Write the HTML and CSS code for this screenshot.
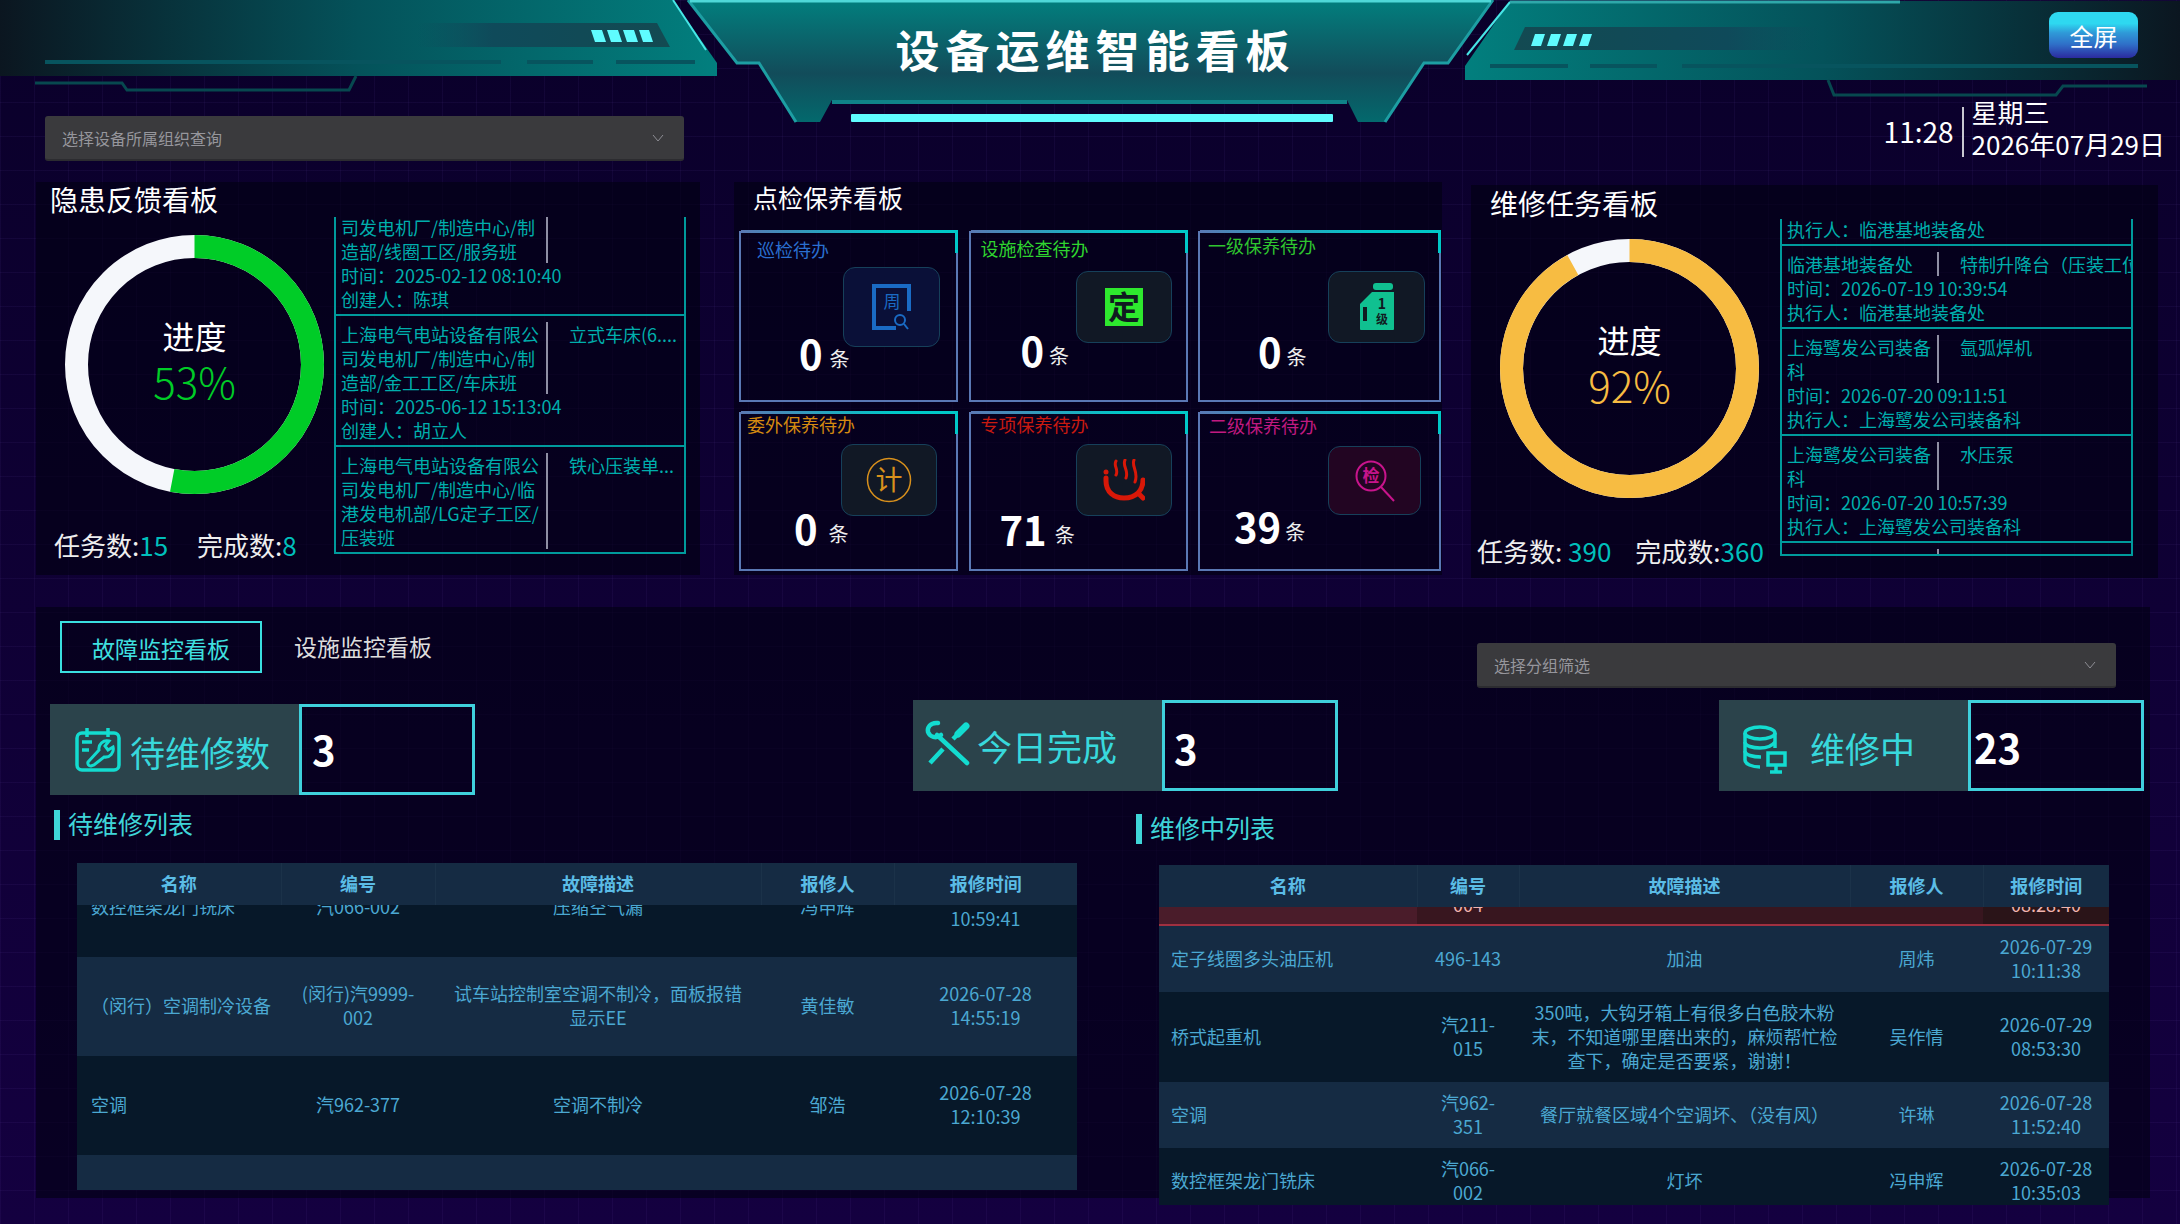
FILE: index.html
```html
<!DOCTYPE html>
<html lang="zh-CN">
<head>
<meta charset="UTF-8" />
<title>设备运维智能看板</title>
<link rel="stylesheet" href="styles.css">
</head>
<body>
<div class="page">

  <header class="top">
    <svg class="top-art" viewBox="0 0 2180 130" width="2180" height="130">
      <defs>
        <linearGradient id="barL" x1="0" x2="1" y1="0" y2="0">
          <stop offset="0" stop-color="#0b1620"/><stop offset="0.5" stop-color="#04525a"/><stop offset="1" stop-color="#027f7e"/>
        </linearGradient>
        <linearGradient id="barR" x1="1" x2="0" y1="0" y2="0">
          <stop offset="0" stop-color="#0b1620"/><stop offset="0.5" stop-color="#04525a"/><stop offset="1" stop-color="#027f7e"/>
        </linearGradient>
        <linearGradient id="mid" x1="0" x2="0" y1="0" y2="1">
          <stop offset="0" stop-color="#027f7e"/><stop offset="0.6" stop-color="#124c5a"/><stop offset="1" stop-color="#03696d"/>
        </linearGradient>
        <linearGradient id="glowL" x1="0" x2="1" y1="0" y2="0">
          <stop offset="0" stop-color="#0b7f84"/><stop offset="1" stop-color="#5ffcff"/>
        </linearGradient>
        <linearGradient id="glowR" x1="1" x2="0" y1="0" y2="0">
          <stop offset="0" stop-color="#0b7f84"/><stop offset="1" stop-color="#5ffcff"/>
        </linearGradient>
        <linearGradient id="plateL" x1="0" x2="1" y1="0" y2="0">
          <stop offset="0" stop-color="#0f4a5a" stop-opacity="0"/><stop offset="0.3" stop-color="#0f4a5a"/><stop offset="1" stop-color="#134a52"/>
        </linearGradient>
        <linearGradient id="plateR" x1="1" x2="0" y1="0" y2="0">
          <stop offset="0" stop-color="#0f4a5a" stop-opacity="0"/><stop offset="0.3" stop-color="#0f4a5a"/><stop offset="1" stop-color="#134a52"/>
        </linearGradient>
      </defs>

      <!-- left wing -->
      <polygon points="0,0 673,0 717,63 717,76 0,76" fill="url(#barL)"/>
      <line x1="673" y1="0" x2="706" y2="50" stroke="#47e6e6" stroke-width="2"/>
      <polygon points="417,23 657,23 670,47 417,47" fill="url(#plateL)"/>
      <g fill="#5ffcff">
        <polygon points="591,30 602,30 606,42 595,42"/>
        <polygon points="607,30 618,30 622,42 611,42"/>
        <polygon points="623,30 634,30 638,42 627,42"/>
        <polygon points="639,30 649,30 653,42 643,42"/>
      </g>
      <path d="M45 62H501M527 62H593M616 62H695" stroke="#07545e" stroke-width="4"/>
      <line x1="356" y1="77" x2="717" y2="77" stroke="url(#glowL)" stroke-width="4"/>
      <path d="M35 83H122L127 90H349L356 76" fill="none" stroke="#07484f" stroke-width="3"/>

      <!-- middle plate -->
      <polygon points="688,0 1493,0 1448,63 1424,63 1385,122 1358,122 1347,100 832,100 820,122 796,122 759,63 737,63" fill="url(#mid)"/>
      <path d="M688 0L737 63H759L796 122" fill="none" stroke="#1d9ea3" stroke-width="3"/>
      <path d="M1493 0L1448 63H1424L1385 122" fill="none" stroke="#1d9ea3" stroke-width="3"/>
      <line x1="690" y1="1" x2="1491" y2="1" stroke="#4fd8d8" stroke-width="3"/>
      <path d="M832 102H1347" stroke="#0f8288" stroke-width="4"/>
      <rect x="851" y="114" width="482" height="8" rx="1" fill="#5ffcff"/>

      <!-- right wing -->
      <polygon points="1510,1 2180,1 2180,80 1465,80 1465,66" fill="url(#barR)"/>
      <line x1="1510" y1="2" x2="1467" y2="55" stroke="#47e6e6" stroke-width="2"/>
      <line x1="1510" y1="2" x2="1900" y2="2" stroke="#2fa8aa" stroke-width="3"/>
      <polygon points="1525,27 1820,27 1820,50 1514,50" fill="url(#plateR)"/>
      <g fill="#5ffcff">
        <polygon points="1535,34 1545,34 1541,46 1531,46"/>
        <polygon points="1551,34 1561,34 1557,46 1547,46"/>
        <polygon points="1567,34 1577,34 1573,46 1563,46"/>
        <polygon points="1583,34 1592,34 1588,46 1579,46"/>
      </g>
      <path d="M1490 66H1568M1590 66H1657M1682 66H2138" stroke="#07545e" stroke-width="4"/>
      <line x1="1465" y1="80" x2="1827" y2="80" stroke="url(#glowR)" stroke-width="4"/>
      <path d="M1828 80L1834 95H2056L2063 86H2147" fill="none" stroke="#07484f" stroke-width="3"/>
    </svg>
    <h1 class="top-title">设备运维智能看板</h1>
    <button class="fullscreen">全屏</button>
  </header>

  <div class="toolbar">
    <div class="select select-org">
      <span>选择设备所属组织查询</span>
      <svg class="chev" viewBox="0 0 12 8" width="12" height="8"><path d="M1 1l5 6 5-6" fill="none" stroke="#8d8d94" stroke-width="1"/></svg>
    </div>
    <div class="clock">
      <div class="clock-time">11:28</div>
      <div class="clock-line"></div>
      <div class="clock-date">
        <div>星期三</div>
        <div>2026年07月29日</div>
      </div>
    </div>
  </div>

  <section class="boards">

    <div class="board board-hazard">
      <div class="board-left">
        <h2 class="board-title">隐患反馈看板</h2>
        <div class="ring">
          <svg viewBox="0 0 259 259" width="259" height="259">
            <circle cx="129.5" cy="129.5" r="118" fill="none" stroke="#f5f7fb" stroke-width="23"/>
            <circle cx="129.5" cy="129.5" r="118" fill="none" stroke="#00cc27" stroke-width="23" stroke-dasharray="393 742" transform="rotate(-90 129.5 129.5)"/>
          </svg>
          <div class="ring-text">
            <div class="ring-label">进度</div>
            <div class="ring-value green">53%</div>
          </div>
        </div>
        <div class="counts">
          <span>任务数:<b>15</b></span>
          <span>完成数:<b>8</b></span>
        </div>
      </div>
      <div class="feed">
        <div class="feed-item feed-scrolled">
          <div class="feed-head">
            <div class="feed-org">上海电气电站设备有限公司发电机厂/制造中心/制造部/线圈工区/服务班</div>
            <div class="feed-name"></div>
          </div>
          <div>时间：2025-02-12 08:10:40</div>
          <div>创建人：陈琪</div>
        </div>
        <div class="feed-item">
          <div class="feed-head">
            <div class="feed-org">上海电气电站设备有限公司发电机厂/制造中心/制造部/金工工区/车床班</div>
            <div class="feed-name">立式车床(6....</div>
          </div>
          <div>时间：2025-06-12 15:13:04</div>
          <div>创建人：胡立人</div>
        </div>
        <div class="feed-item">
          <div class="feed-head">
            <div class="feed-org">上海电气电站设备有限公司发电机厂/制造中心/临港发电机部/LG定子工区/压装班</div>
            <div class="feed-name">铁心压装单...</div>
          </div>
        </div>
      </div>
    </div>

    <div class="board board-check">
      <h2 class="board-title">点检保养看板</h2>
      <div class="cards">
        <div class="card card-a">
          <div class="card-label">巡检待办</div>
          <div class="card-icon">
            <svg viewBox="0 0 40 46" width="40" height="46">
              <path d="M24 44H2V2H37V27" fill="none" stroke="#1a6bc4" stroke-width="4"/>
              <text x="20" y="24" class="glyph" font-size="17" fill="#1a6bc4" text-anchor="middle">周</text>
              <circle cx="28" cy="36" r="5" fill="none" stroke="#1a6bc4" stroke-width="2"/>
              <line x1="32" y1="40" x2="36" y2="45" stroke="#1a6bc4" stroke-width="2"/>
            </svg>
          </div>
          <div class="card-value"><b>0</b><span>条</span></div>
        </div>
        <div class="card card-b">
          <div class="card-label">设施检查待办</div>
          <div class="card-icon">
            <svg viewBox="0 0 38 38" width="38" height="38">
              <rect width="38" height="38" fill="#2ee82e"/>
              <text x="19" y="31" class="glyph glyph-bold" font-size="32" fill="#101a20" text-anchor="middle">定</text>
            </svg>
          </div>
          <div class="card-value"><b>0</b><span>条</span></div>
        </div>
        <div class="card card-c">
          <div class="card-label">一级保养待办</div>
          <div class="card-icon">
            <svg viewBox="0 0 36 48" width="36" height="48">
              <rect x="14" y="0" width="20" height="7" rx="3" fill="#10c090"/>
              <path d="M13 9H35V46a1 1 0 0 1-1 1H2a1 1 0 0 1-1-1V21z" fill="#10c090"/>
              <rect x="4" y="24" width="4" height="14" fill="#101a20"/>
              <text x="23" y="26" class="glyph glyph-bold" font-size="14" fill="#101a20" text-anchor="middle">1</text>
              <text x="23" y="41" class="glyph glyph-bold" font-size="12" fill="#101a20" text-anchor="middle">级</text>
            </svg>
          </div>
          <div class="card-value"><b>0</b><span>条</span></div>
        </div>
        <div class="card card-d">
          <div class="card-label">委外保养待办</div>
          <div class="card-icon">
            <svg viewBox="0 0 46 46" width="46" height="46">
              <circle cx="23" cy="23" r="21.5" fill="none" stroke="#d8901c" stroke-width="1.5"/>
              <text x="23" y="33" class="glyph" font-size="27" fill="#d8901c" text-anchor="middle">计</text>
            </svg>
          </div>
          <div class="card-value"><b>0</b><span>条</span></div>
        </div>
        <div class="card card-e">
          <div class="card-label">专项保养待办</div>
          <div class="card-icon">
            <svg viewBox="0 0 42 42" width="42" height="42">
              <g fill="none" stroke="#d81808" stroke-width="3" stroke-linecap="round">
                <path d="M13 2c-3 5 3 8 0 14"/>
                <path d="M22 1c-3 6 4 10 1 18"/>
                <path d="M31 1c-3 6 5 12 1 22"/>
              </g>
              <path d="M3 19v3c0 11 8 17 18 17 6 0 11-2 14-5l5 5M40 21c0 6-2 10-5 13" fill="none" stroke="#d81808" stroke-width="5" stroke-linecap="round"/>
              <circle cx="3" cy="13" r="2.5" fill="#d81808"/>
            </svg>
          </div>
          <div class="card-value"><b>71</b><span>条</span></div>
        </div>
        <div class="card card-f">
          <div class="card-label">二级保养待办</div>
          <div class="card-icon">
            <svg viewBox="0 0 40 42" width="40" height="42">
              <circle cx="16" cy="16" r="14.500" fill="none" stroke="#c8148c" stroke-width="2"/>
              <line x1="26" y1="27" x2="39" y2="41" stroke="#c8148c" stroke-width="2"/>
              <text x="16" y="22" class="glyph glyph-bold" font-size="17" fill="#c8148c" text-anchor="middle">检</text>
            </svg>
          </div>
          <div class="card-value"><b>39</b><span>条</span></div>
        </div>
      </div>
    </div>

    <div class="board board-repair">
      <div class="board-left">
        <h2 class="board-title">维修任务看板</h2>
        <div class="ring">
          <svg viewBox="0 0 259 259" width="259" height="259">
            <circle cx="129.5" cy="129.5" r="118" fill="none" stroke="#f5f7fb" stroke-width="23"/>
            <circle cx="129.5" cy="129.5" r="118" fill="none" stroke="#f7bc42" stroke-width="23" stroke-dasharray="682 742" transform="rotate(-90 129.5 129.5)"/>
          </svg>
          <div class="ring-text">
            <div class="ring-label">进度</div>
            <div class="ring-value gold">92%</div>
          </div>
        </div>
        <div class="counts">
          <span>任务数: <b>390</b></span>
          <span>完成数:<b>360</b></span>
        </div>
      </div>
      <div class="feed">
        <div class="feed-item feed-tail">
          <div>执行人：临港基地装备处</div>
        </div>
        <div class="feed-item">
          <div class="feed-head">
            <div class="feed-org">临港基地装备处</div>
            <div class="feed-name">特制升降台（压装工位）</div>
          </div>
          <div>时间：2026-07-19 10:39:54</div>
          <div>执行人：临港基地装备处</div>
        </div>
        <div class="feed-item">
          <div class="feed-head">
            <div class="feed-org">上海鹭发公司装备科</div>
            <div class="feed-name">氩弧焊机</div>
          </div>
          <div>时间：2026-07-20 09:11:51</div>
          <div>执行人：上海鹭发公司装备科</div>
        </div>
        <div class="feed-item">
          <div class="feed-head">
            <div class="feed-org">上海鹭发公司装备科</div>
            <div class="feed-name">水压泵</div>
          </div>
          <div>时间：2026-07-20 10:57:39</div>
          <div>执行人：上海鹭发公司装备科</div>
        </div>
        <div class="feed-item">
          <div class="feed-head">
            <div class="feed-org feed-blank"></div>
          </div>
        </div>
      </div>
    </div>

  </section>

  <section class="monitor">
    <div class="monitor-top">
      <div class="tabs">
        <div class="tab active">故障监控看板</div>
        <div class="tab">设施监控看板</div>
      </div>
      <div class="select select-group">
        <span>选择分组筛选</span>
        <svg class="chev" viewBox="0 0 12 8" width="12" height="8"><path d="M1 1l5 6 5-6" fill="none" stroke="#8d8d94" stroke-width="1"/></svg>
      </div>
    </div>

    <div class="stats">
      <div class="stat stat-wait">
        <div class="stat-name">
          <svg viewBox="0 0 60 60" width="60" height="60" fill="none" stroke="#13dcd0">
            <rect x="7" y="13" width="42" height="37" rx="5" stroke-width="3.5"/>
            <path d="M17 8V17M38 8V17M12 22H22M12 30H19" stroke-width="3.5"/>
            <path d="M21 46a3 3 0 0 1-3-4L29 30a8 8 0 0 1 10-9l-4 5 3 4 5-3a8 8 0 0 1-9 10L24 45z" stroke-width="3"/>
          </svg>
          <span>待维修数</span>
        </div>
        <div class="stat-value">3</div>
      </div>
      <div class="stat stat-done">
        <div class="stat-name">
          <svg viewBox="0 0 60 60" width="60" height="60" fill="none" stroke="#13dcd0">
            <path d="M17 19L47 47" stroke-width="4.500" stroke-linecap="round"/>
            <path d="M18 7C10 6 7 12 8 16C10 21 16 23 21 19" stroke-width="4.500" stroke-linecap="round"/>
            <path d="M46 10L38 18" stroke-width="7" stroke-linecap="round"/>
            <path d="M38 18L33 23M23 33L10 47" stroke-width="4.500"/>
          </svg>
          <span>今日完成</span>
        </div>
        <div class="stat-value">3</div>
      </div>
      <div class="stat stat-doing">
        <div class="stat-name">
          <svg viewBox="0 0 60 60" width="60" height="60" fill="none" stroke="#13dcd0" stroke-width="3.500">
            <ellipse cx="25" cy="13" rx="15" ry="6"/>
            <path d="M10 13V40c0 4 7 7 15 7M40 13V28"/>
            <path d="M10 22c0 4 8 6 15 6s12-2 15-6M10 31c0 4 8 6 16 6"/>
            <rect x="33" y="33" width="17" height="12"/>
            <path d="M41 45V52M35 52H47"/>
          </svg>
          <span>维修中</span>
        </div>
        <div class="stat-value">23</div>
      </div>
    </div>

    <div class="lists">
      <div class="list list-wait">
        <div class="list-title">待维修列表</div>
        <div class="list-table">
          <table class="list-head">
            <colgroup><col class="c1"><col class="c2"><col class="c3"><col class="c4"><col class="c5"></colgroup>
            <tr><th>名称</th><th>编号</th><th>故障描述</th><th>报修人</th><th>报修时间</th></tr>
          </table>
          <div class="list-body">
            <table>
              <colgroup><col class="c1"><col class="c2"><col class="c3"><col class="c4"><col class="c5"></colgroup>
              <tr><td class="name">数控框架龙门铣床</td><td>汽066-002</td><td>压缩空气漏</td><td>冯申辉</td><td>2026-07-28 10:59:41</td></tr>
              <tr><td class="name">（闵行）空调制冷设备</td><td>(闵行)汽9999-002</td><td>试车站控制室空调不制冷，面板报错显示EE</td><td>黄佳敏</td><td>2026-07-28 14:55:19</td></tr>
              <tr><td class="name">空调</td><td>汽962-377</td><td>空调不制冷</td><td>邹浩</td><td>2026-07-28 12:10:39</td></tr>
              <tr><td class="name"></td><td></td><td></td><td></td><td></td></tr>
            </table>
          </div>
        </div>
      </div>

      <div class="list list-doing">
        <div class="list-title">维修中列表</div>
        <div class="list-table">
          <table class="list-head">
            <colgroup><col class="c1"><col class="c2"><col class="c3"><col class="c4"><col class="c5"></colgroup>
            <tr><th>名称</th><th>编号</th><th>故障描述</th><th>报修人</th><th>报修时间</th></tr>
          </table>
          <div class="list-body">
            <table>
              <colgroup><col class="c1"><col class="c2"><col class="c3"><col class="c4"><col class="c5"></colgroup>
              <tr class="overdue"><td class="name"></td><td>汽211-004</td><td></td><td></td><td>2026-07-29 08:28:40</td></tr>
              <tr><td class="name">定子线圈多头油压机</td><td>496-143</td><td>加油</td><td>周炜</td><td>2026-07-29 10:11:38</td></tr>
              <tr><td class="name">桥式起重机</td><td>汽211-015</td><td>350吨，大钩牙箱上有很多白色胶木粉末，不知道哪里磨出来的，麻烦帮忙检查下，确定是否要紧，谢谢！</td><td>吴作情</td><td>2026-07-29 08:53:30</td></tr>
              <tr><td class="name">空调</td><td>汽962-351</td><td>餐厅就餐区域4个空调坏、（没有风）</td><td>许琳</td><td>2026-07-28 11:52:40</td></tr>
              <tr><td class="name">数控框架龙门铣床</td><td>汽066-002</td><td>灯坏</td><td>冯申辉</td><td>2026-07-28 10:35:03</td></tr>
            </table>
          </div>
        </div>
      </div>
    </div>
  </section>

</div>
</body>
</html>
```

FILE: styles.css
```css
* { box-sizing:border-box; }
html, body { margin:0; padding:0; }
body { width:2180px; height:1224px; overflow:hidden; background:#0d0033; color:#fff; font-family:"Noto Sans CJK SC","Noto Sans",sans-serif; }
.page {
  width:2180px; height:1224px; overflow:hidden;
  background-color:#0e0034;
  background-image:
    linear-gradient(rgba(130,90,210,.07) 1px, transparent 1px),
    linear-gradient(90deg, rgba(130,90,210,.07) 1px, transparent 1px),
    linear-gradient(#0a002a, #140040);
  background-size:34px 34px, 34px 34px, 100% 100%;
}
h1, h2 { margin:0; font-weight:normal; }

/* header */
.top { position:relative; height:103px; display:flex; justify-content:center; }
.top-art { position:absolute; left:0; top:0; }
.top-title { position:relative; margin:21px 0 0 11px; font-size:44px; line-height:56px; font-weight:700; letter-spacing:6px; }
.fullscreen {
  position:absolute; left:2049px; top:12px; width:89px; height:46px; padding:0; border:none; border-radius:9px; color:#fff;
  font:24px "Noto Sans CJK SC",sans-serif;
  background:linear-gradient(#2ed8f0 0 25%, #2f9ad8 45%, #2f70c8 70%, #2b2a9f 100%);
}

/* select + clock */
.toolbar { height:79px; padding:0 15px 0 45px; display:flex; justify-content:space-between; align-items:flex-start; }
.select { display:flex; justify-content:space-between; align-items:center; height:45px; padding:0 20px 0 17px; background:#3a3a3d; border-radius:3px; border-bottom:2px solid #2c2c30; color:#96969c; font-size:16px; }
.select-org { width:639px; margin-top:13px; }
.select-group { width:639px; margin:22px 26px 0 0; }
.clock { display:flex; align-items:center; margin-top:-7px; }
.clock-time { font-size:28px; line-height:34px; margin-top:6px; }
.clock-line { width:2px; height:50px; background:#c8c8d0; margin:8px 8px 0 8px; }
.clock-date { font-size:26px; line-height:32px; }

/* top boards */
.boards { display:flex; align-items:flex-start; padding-left:36px; height:396px; }
.board { background:rgba(2,0,18,.62); height:393px; }
.board-hazard { width:664px; display:flex; }
.board-check { width:708px; margin-left:34px; }
.board-repair { width:687px; margin:3px 0 0 29px; display:flex; }
.board-title { font-size:28px; line-height:34px; height:36px; }
.board-hazard .board-left { width:298px; }
.board-hazard .board-title { padding:0 0 0 14px; }
.board-repair .board-left { width:309px; }
.board-repair .board-title { padding:1px 0 0 19px; }
.board-check .board-title { font-size:25px; line-height:30px; padding:0 0 0 19px; height:49px; }

.ring { display:grid; width:259px; height:259px; margin:17px 0 0 29px; }
.board-repair .ring { margin-top:18px; }
.ring svg, .ring-text { grid-area:1 / 1; }
.ring-text { display:flex; flex-direction:column; align-items:center; justify-content:center; }
.ring-label { font-size:32px; line-height:42px; margin-top:-10px; }
.ring-value { font-size:42px; line-height:50px; font-weight:300; }
.green { color:#00cc27; }
.gold { color:#f7bc42; }

.counts { display:flex; gap:29px; padding-left:18px; margin-top:36px; font-size:26px; line-height:30px; color:#eee; }
.counts b { font-weight:normal; color:#00bfbb; }
.board-repair .counts { gap:24px; padding-left:6px; margin-top:38px; }

.feed { overflow:hidden; height:337px; margin-top:35px; width:352px; border:2px solid #009a9c; border-top:none; color:#00aeac; font-size:18px; line-height:24px; padding:0; }
.board-repair .feed { margin-top:34px; width:353px; }
.feed-item { padding:6px 0 3px 5px; border-bottom:2px solid #009a9c; white-space:nowrap; }
.feed-scrolled { margin-top:-32px; }
.feed-tail { padding-top:0; margin-top:-2px; }
.feed-head { display:flex; }
.feed-org { width:207px; white-space:normal; border-right:2px solid #8f8fa4; flex:none; }
.board-repair .feed-org { width:152px; }
.feed-blank { height:24px; }
.feed-name { padding-left:21px; overflow:hidden; white-space:nowrap; }

/* cards */
.cards { display:grid; grid-template-columns:219px 219px 243px; grid-template-rows:171px 159px; column-gap:10.5px; row-gap:10px; padding-left:5px; }
.card { position:relative; border:2px solid #5a78b4; display:flex; flex-direction:column; }
.card::before { content:""; position:absolute; right:-2px; top:-3px; left:0; height:3px; background:linear-gradient(90deg, #5a78b4, #00c8c8 70%); }
.card::after { content:""; position:absolute; right:-2px; top:0; width:3px; height:20px; background:#00c8c8; }
.card-label { font-size:18px; line-height:24px; margin:var(--ly) 0 0 var(--lx); }
.card-icon { display:flex; align-items:center; justify-content:center; align-self:flex-end; flex:none; width:var(--iw); height:var(--ih); margin:var(--iy) var(--ix) 0 0; border:1px solid #16405a; border-radius:12px; background:#111825; }
.card-value { position:relative; display:flex; align-items:baseline; margin:var(--vy) 0 0 var(--vx); gap:var(--vg); line-height:40px; }
.card-value b { font-size:40px; font-weight:700; }
.card-value span { font-size:20px; color:#eee; margin-top:-3px; position:relative; top:-3px; }
.glyph { font-family:"Noto Sans CJK SC",sans-serif; }
.glyph-bold { font-weight:700; }

.card-a { --ly:4px; --lx:16px; --iy:6px; --ix:16px; --iw:97px; --ih:80px; --vy:-14px; --vx:58px; --vg:7px; }
.card-b { --ly:3px; --lx:10px; --iy:11px; --ix:14px; --iw:96px; --ih:72px; --vy:-13px; --vx:50px; --vg:5px; }
.card-c { --ly:0px; --lx:8px; --iy:14px; --ix:14px; --iw:97px; --ih:72px; --vy:-12px; --vx:58px; --vg:5px; }
.card-d { --ly:-2px; --lx:6px; --iy:8px; --ix:19px; --iw:96px; --ih:72px; --vy:-8px; --vx:53px; --vg:11px; }
.card-e { --ly:-2px; --lx:10px; --iy:8px; --ix:14px; --iw:96px; --ih:72px; --vy:-7px; --vx:29px; --vg:8px; }
.card-f { --ly:-1px; --lx:9px; --iy:9px; --ix:18px; --iw:93px; --ih:69px; --vy:-9px; --vx:34px; --vg:4px; }
.card-a .card-label { color:#2a6fd0; }
.card-a .card-icon { background:#0a1038; }
.card-b .card-label { color:#2fd52f; }
.card-c .card-label { color:#2fc52f; }
.card-d .card-label { color:#d48a10; }
.card-e .card-label { color:#c81a10; }
.card-f .card-label { color:#c01a80; }
.card-f .card-icon { background:#220522; }

/* monitor */
.monitor { width:2114px; height:591px; margin:29px 0 0 36px; padding:14px 8px 0 14px; background:rgba(2,0,18,.62); }
.monitor-top { display:flex; justify-content:space-between; align-items:flex-start; height:79px; }
.tabs { display:flex; gap:32px; margin-left:10px; }
.tab { height:52px; line-height:50px; font-size:23px; color:#ddd; }
.tab.active { width:202px; text-align:center; border:2px solid #3adfe0; color:#3fe0e0; }

.stats { display:flex; align-items:flex-start; }
.stat { display:flex; }
.stat-name { display:flex; align-items:center; width:249px; height:91px; background:#2b434b; color:#38d8dc; font-size:35px; }
.stat-value { width:176px; height:91px; border:3px solid #3fd0dc; font-size:40px; font-weight:700; line-height:84px; padding-left:10px; }
.stat-wait { margin-top:4px; }
.stat-wait .stat-name { padding-left:20px; gap:0; }
.stat-wait .stat-name span { margin-top:3px; }
.stat-done { margin-left:438px; }
.stat-done .stat-name { padding-left:7px; gap:0; }
.stat-done .stat-name svg { margin-right:-3px; }
.stat-done .stat-value { padding-left:9px; line-height:90px; }
.stat-doing { margin-left:381px; }
.stat-doing .stat-name { padding-left:16px; gap:15px; }
.stat-doing .stat-name svg { margin-top:9px; }
.stat-doing .stat-name span { margin-top:4px; }
.stat-doing .stat-value { padding-left:3px; line-height:89px; }

.lists { display:flex; }
.list { flex:none; }
.list-wait { width:1086px; padding-top:15px; }
.list-doing { padding-top:15px; }
.list-title { height:30px; line-height:26px; font-size:25px; color:#3fd5d8; border-left:6px solid #3fd5d8; padding-left:8px; margin-left:4px; }
.list-doing .list-title { margin:4px 0 0 0; }
.list-table { margin:23px 0 0 27px; }
.list-doing .list-table { margin:21px 0 0 23px; width:950px; }
.list-wait .list-table { width:1000px; }

table { width:100%; table-layout:fixed; border-collapse:collapse; }
th { height:42px; padding-bottom:3px; background:#152b43; color:#5bbce6; font-size:18px; font-weight:700; border-right:1px solid #1b3249; }
th:last-child { border-right:none; }
td { text-align:center; color:#4ba8d2; font-size:18px; line-height:24px; padding:0 14px; }
td.name { text-align:left; padding-right:4px; }
.list-body { overflow:hidden; }
.list-wait .list-body { height:285px; }
.list-doing .list-body { height:298px; }
.list-wait .list-body table { margin-top:-47px; }
.list-doing .list-body table { margin-top:-50px; }
.list-wait td { height:99px; padding-bottom:3px; }
.list-doing td { padding:8px 12px 10px; }
tr:nth-child(odd) td { background:#071829; }
tr:nth-child(even) td { background:#152b43; }
.list-doing tr.overdue td { padding:11px 12px 8px; color:#f0b4ae; background:#38161f; border-bottom:2px solid #a03040; }
.list-doing tr.overdue td:first-child { background:#4a1c2a; }
.list-doing tr.overdue td:last-child { background:#2a1418; }

.list-wait .c1 { width:204px; }
.list-wait .c2 { width:154px; }
.list-wait .c3 { width:326px; }
.list-wait .c4 { width:133px; }
.list-wait .c5 { width:183px; }
.list-doing .c1 { width:258px; }
.list-doing .c2 { width:102px; }
.list-doing .c3 { width:331px; }
.list-doing .c4 { width:133px; }
.list-doing .c5 { width:126px; }
```
